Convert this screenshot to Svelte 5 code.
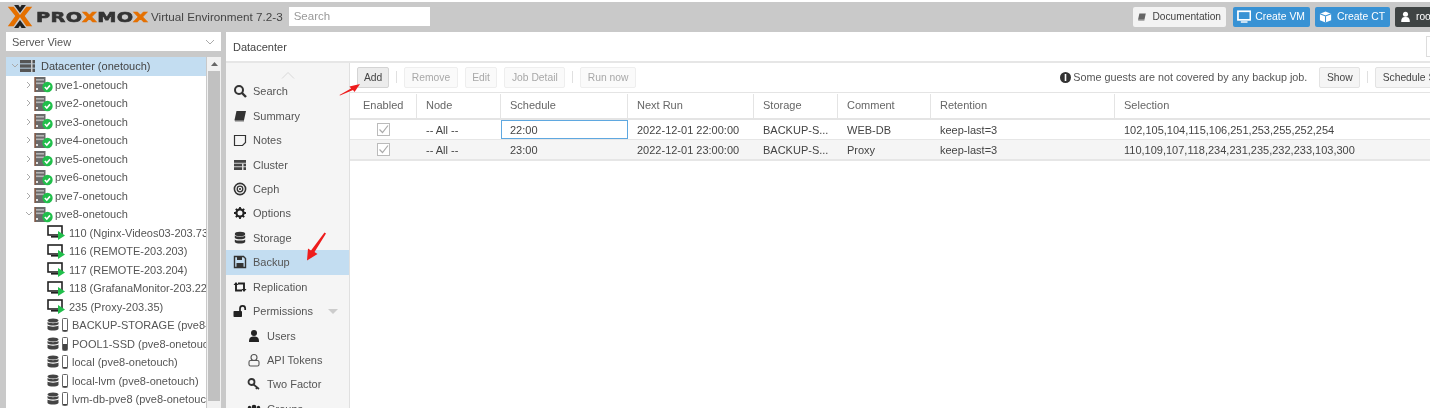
<script lang="ts">
  const nodes = ["pve1-onetouch", "pve2-onetouch", "pve3-onetouch", "pve4-onetouch", "pve5-onetouch", "pve6-onetouch", "pve7-onetouch"];
  const vms = ["110 (Nginx-Videos03-203.73)", "116 (REMOTE-203.203)", "117 (REMOTE-203.204)", "118 (GrafanaMonitor-203.220)", "235 (Proxy-203.35)"];
  const stores = [
    { name: "BACKUP-STORAGE (pve8-onetouch)", fill: 1 },
    { name: "POOL1-SSD (pve8-onetouch)", fill: 6 },
    { name: "local (pve8-onetouch)", fill: 1 },
    { name: "local-lvm (pve8-onetouch)", fill: 1 },
    { name: "lvm-db-pve8 (pve8-onetouch)", fill: 1 }
  ];
  const nav = [
    { label: "Search", icon: "search" },
    { label: "Summary", icon: "book" },
    { label: "Notes", icon: "note" },
    { label: "Cluster", icon: "cluster" },
    { label: "Ceph", icon: "ceph" },
    { label: "Options", icon: "gear" },
    { label: "Storage", icon: "db" },
    { label: "Backup", icon: "save", active: true },
    { label: "Replication", icon: "retweet" },
    { label: "Permissions", icon: "unlock", caret: true },
    { label: "Users", icon: "user", sub: true },
    { label: "API Tokens", icon: "lock", sub: true },
    { label: "Two Factor", icon: "key", sub: true },
    { label: "Groups", icon: "users", sub: true }
  ];
  const columns = [
    { label: "Enabled", w: 67 },
    { label: "Node", w: 84 },
    { label: "Schedule", w: 127 },
    { label: "Next Run", w: 126 },
    { label: "Storage", w: 84 },
    { label: "Comment", w: 93 },
    { label: "Retention", w: 184 },
    { label: "Selection", w: 320 }
  ];
  const jobs = [
    { time: "22:00", next: "2022-12-01 22:00:00", storage: "BACKUP-S...", comment: "WEB-DB", keep: "keep-last=3", sel: "102,105,104,115,106,251,253,255,252,254" },
    { time: "23:00", next: "2022-12-01 23:00:00", storage: "BACKUP-S...", comment: "Proxy", keep: "keep-last=3", sel: "110,109,107,118,234,231,235,232,233,103,300" }
  ];
</script>

{#snippet server()}
  <svg class="ico" width="20" height="17" viewBox="0 0 20 17">
    <rect x="0.5" y="1" width="11" height="15" fill="#6b6b6b" />
    <rect x="2" y="3" width="8" height="1.6" fill="#b5b5b5" />
    <rect x="2" y="6.5" width="8" height="1.6" fill="#b5b5b5" />
    <rect x="2" y="12" width="2" height="2" fill="#e3e3e3" />
    <rect x="0.5" y="1" width="1.4" height="15" fill="#8a5a44" />
    <circle cx="13.5" cy="11" r="5.2" fill="#21bf4b" />
    <path d="M10.8 11l2 2 3.2-3.6" fill="none" stroke="#fff" stroke-width="1.6" />
  </svg>
{/snippet}

{#snippet navIcon(name: string)}
  <svg class="ico" width="14" height="14" viewBox="0 0 14 14">
    {#if name === "search"}
      <circle cx="6" cy="6" r="4" fill="none" stroke="#333" stroke-width="2" />
      <path d="M9 9l4 4" stroke="#333" stroke-width="2.4" />
    {:else if name === "book"}
      <path d="M3.5 2h9.5l-2 9H1.5z" fill="#333" />
      <path d="M1.5 11h9.5v1.5H2z" fill="#777" />
    {:else if name === "note"}
      <path d="M1.5 2.5h11v7l-3 3h-8z" fill="none" stroke="#333" stroke-width="1.2" />
    {:else if name === "cluster"}
      <rect x="1" y="2" width="12" height="2.8" fill="#444" />
      <rect x="1" y="5.6" width="12" height="2.8" fill="#444" />
      <rect x="1" y="9.2" width="12" height="2.8" fill="#444" />
      <rect x="9" y="5.6" width="1.5" height="6.4" fill="#ddd" />
    {:else if name === "ceph"}
      <circle cx="7" cy="7" r="5.6" fill="none" stroke="#333" stroke-width="1.6" />
      <circle cx="7" cy="7" r="2.8" fill="none" stroke="#333" stroke-width="1.3" />
      <circle cx="7" cy="7" r="1.1" fill="#333" />
    {:else if name === "gear"}
      <circle cx="7" cy="7" r="3.6" fill="none" stroke="#222" stroke-width="2.2" />
      <path d="M7 1v2.4M7 10.6V13M1 7h2.4M10.6 7H13M2.8 2.8l1.7 1.7M9.5 9.5l1.7 1.7M2.8 11.2l1.7-1.7M9.5 4.5l1.7-1.7" stroke="#222" stroke-width="1.8" />
    {:else if name === "db"}
      <ellipse cx="7" cy="3" rx="5.2" ry="2.2" fill="#333" />
      <path d="M1.8 4.6c1.4 1.6 9 1.6 10.4 0V7c-1.4 1.8-9 1.8-10.4 0zM1.8 8.4c1.4 1.6 9 1.6 10.4 0v2.6c-1.4 2-9 2-10.4 0z" fill="#333" />
    {:else if name === "save"}
      <path d="M1.5 1.5h9l2 2v9h-11z" fill="none" stroke="#333" stroke-width="1.4" />
      <rect x="4" y="2" width="5" height="3" fill="#333" />
      <rect x="3.5" y="8" width="7" height="4" fill="#333" />
    {:else if name === "retweet"}
      <path d="M3 3.5v7h6M11 10.5v-7H5" fill="none" stroke="#222" stroke-width="1.9" />
      <path d="M0.5 5L3 2l2.5 3zM8.5 9l2.5 3 2.5-3z" fill="#222" />
    {:else if name === "unlock"}
      <rect x="0.5" y="7" width="8.5" height="6" rx="0.8" fill="#222" />
      <path d="M7 7V4.5a2.6 2.6 0 0 1 5.2 0V6" fill="none" stroke="#222" stroke-width="1.7" />
    {:else if name === "user"}
      <circle cx="7" cy="4" r="3" fill="#222" />
      <path d="M2 13c0-5 2-5.5 5-5.5s5 .5 5 5.5z" fill="#222" />
    {:else if name === "lock"}
      <circle cx="7" cy="4.5" r="3" fill="none" stroke="#555" stroke-width="1.1" />
      <rect x="2" y="7.5" width="10" height="5.5" rx="1.5" fill="#f5f5f5" stroke="#555" stroke-width="1.1" />
    {:else if name === "key"}
      <circle cx="4.5" cy="5" r="3" fill="none" stroke="#333" stroke-width="1.8" />
      <path d="M6.5 7.5l5.5 4.5M10 10.5l-1 1.5" stroke="#333" stroke-width="1.7" />
    {:else}
      <circle cx="7" cy="5" r="2.3" fill="#222" />
      <circle cx="2.5" cy="5.5" r="1.7" fill="#222" />
      <circle cx="11.5" cy="5.5" r="1.7" fill="#222" />
      <path d="M3 12c0-3 1.5-4 4-4s4 1 4 4zM0 10.5c0-2 1-2.5 2.5-2.5zM14 10.5c0-2-1-2.5-2.5-2.5z" fill="#222" />
    {/if}
  </svg>
{/snippet}

<div class="page">
  <header class="top">
    <div class="brand">
      <svg width="26" height="23" viewBox="0 0 33 27" preserveAspectRatio="none">
        <path d="M1 2h7.5l9 11-9 12H1l9.5-12z" fill="#e57000" />
        <path d="M32 2h-7.5l-9 11 9 12H32l-9.5-12z" fill="#e57000" />
        <path d="M9 0h5.5l2 3 2-3H24l-7.5 9.5zM9 27h5.5l2-3 2 3H24l-7.5-9.5z" fill="#222" />
      </svg>
      <span class="wordmark">PRO<b>X</b>MO<b>X</b></span>
    </div>
    <span class="version">Virtual Environment 7.2-3</span>
    <div class="search">Search</div>
    <div class="top-right">
      <span class="tbtn doc">
        <svg width="13" height="12" viewBox="0 0 14 14"><path d="M3.5 2h9.5l-2 9H1.5z" fill="#666" /><path d="M1.5 11h9.5v1.5H2z" fill="#999" /></svg>
        Documentation
      </span>
      <span class="tbtn blue">
        <svg width="15" height="14" viewBox="0 0 15 14"><rect x="1" y="1" width="13" height="9" fill="none" stroke="#fff" stroke-width="1.8" /><path d="M4 13h7v-1.5H4z" fill="#fff" /></svg>
        Create VM
      </span>
      <span class="tbtn blue ct">
        <svg width="14" height="14" viewBox="0 0 14 14"><path d="M7 1l6 2.5v7L7 13l-6-2.5v-7z" fill="#fff" /><path d="M1 3.5L7 6l6-2.5M7 6v7" fill="none" stroke="#3892d4" stroke-width="1.1" /></svg>
        Create CT
      </span>
      <span class="tbtn dark">
        <svg width="11" height="13" viewBox="0 0 14 14"><circle cx="7" cy="4" r="3.2" fill="#fff" /><path d="M1.5 14c0-6 2.5-6.5 5.5-6.5s5.5.5 5.5 6.5z" fill="#fff" /></svg>
        root@pam
      </span>
    </div>
  </header>

  <div class="main">
    <aside class="left">
      <div class="viewsel">
        <span>Server View</span>
        <svg width="10" height="6" viewBox="0 0 10 6"><path d="M1 1l4 4 4-4" fill="none" stroke="#aaa" /></svg>
      </div>
      <div class="tree-wrap">
        <div class="tree">
          <div class="row root">
            <svg class="chev" width="8" height="8" viewBox="0 0 8 8"><path d="M1 2l3 3 3-3" fill="none" stroke="#aaa" /></svg>
            <svg class="ico" width="15" height="14" viewBox="0 0 15 14">
              <rect x="0" y="1" width="15" height="3.4" fill="#555" />
              <rect x="0" y="5.3" width="15" height="3.4" fill="#555" />
              <rect x="0" y="9.6" width="15" height="3.4" fill="#555" />
              <rect x="11" y="1" width="1.5" height="12" fill="#ccc" />
            </svg>
            <span class="root-label">Datacenter (onetouch)</span>
          </div>
          {#each nodes as n}
            <div class="row node">
              <svg class="chev" width="8" height="8" viewBox="0 0 8 8"><path d="M2 1l3 3-3 3" fill="none" stroke="#aaa" /></svg>
              {@render server()}
              <span>{n}</span>
            </div>
          {/each}
          <div class="row node">
            <svg class="chev" width="8" height="8" viewBox="0 0 8 8"><path d="M1 2l3 3 3-3" fill="none" stroke="#aaa" /></svg>
            {@render server()}
            <span>pve8-onetouch</span>
          </div>
          {#each vms as v}
            <div class="row leaf">
              <svg class="ico" width="19" height="15" viewBox="0 0 19 15">
                <rect x="1" y="1" width="14" height="9" fill="none" stroke="#222" stroke-width="1.6" />
                <rect x="4" y="11" width="8" height="1.6" fill="#222" />
                <path d="M11 6l7 4.5-7 4.5z" fill="#21bf4b" />
              </svg>
              <span>{v}</span>
            </div>
          {/each}
          {#each stores as s}
            <div class="row leaf">
              <svg class="ico" width="22" height="14" viewBox="0 0 22 14">
                <ellipse cx="6" cy="2.5" rx="5.5" ry="2" fill="#444" />
                <path d="M.5 4c1.5 1.5 9.5 1.5 11 0v2.3c-1.5 1.7-9.5 1.7-11 0zM.5 7.5c1.5 1.5 9.5 1.5 11 0v3.5c-1.5 2-9.5 2-11 0z" fill="#444" />
                <rect x="15.5" y="0.5" width="5" height="13" rx="0.8" fill="#fff" stroke="#666" />
                <rect x="16" y={13 - s.fill} width="4" height={s.fill} fill="#444" />
              </svg>
              <span>{s.name}</span>
            </div>
          {/each}
        </div>
        <div class="scroll">
          <div class="scroll-btn"><svg width="7" height="4" viewBox="0 0 7 4"><path d="M0 4l3.5-4L7 4z" fill="#666" /></svg></div>
          <div class="thumb"></div>
        </div>
      </div>
    </aside>

    <section class="right">
      <div class="title">Datacenter<span class="title-btn"></span></div>
      <div class="panel">
        <nav class="tabs">
          <div class="tab-up"><svg width="14" height="7" viewBox="0 0 14 7"><path d="M1 6.5l6-6 6 6" fill="none" stroke="#d8d8d8" /></svg></div>
          {#each nav as item}
            <div class="tab" class:active={item.active} class:sub={item.sub}>
              {@render navIcon(item.icon)}
              <span>{item.label}</span>
              {#if item.caret}
                <svg class="caret" width="10" height="5" viewBox="0 0 10 5"><path d="M0 0h10L5 5z" fill="#ccc" /></svg>
              {/if}
            </div>
          {/each}
        </nav>
        <div class="content">
          <div class="toolbar">
            <span class="btn strong">Add</span>
            <i class="sep"></i>
            <span class="btn off">Remove</span>
            <span class="btn off">Edit</span>
            <span class="btn off">Job Detail</span>
            <i class="sep"></i>
            <span class="btn off">Run now</span>
            <div class="notice">
              <svg width="11" height="11" viewBox="0 0 11 11"><circle cx="5.5" cy="5.5" r="5.5" fill="#333" /><rect x="4.7" y="2" width="1.6" height="7" fill="#fff" /></svg>
              Some guests are not covered by any backup job.
            </div>
            <span class="btn show">Show</span>
            <i class="sep"></i>
            <span class="btn sched">Schedule Summary</span>
          </div>
          <div class="thead">
            {#each columns as c}
              <div class="th" style="width: {c.w}px">{c.label}</div>
            {/each}
          </div>
          {#each jobs as j, i}
            <div class="tr" class:alt={i === 1}>
              <div class="td check" style="width: {columns[0].w}px">
                <svg width="13" height="13" viewBox="0 0 13 13"><rect x="0.5" y="0.5" width="12" height="12" fill="#fff" stroke="#bbb" /><path d="M2.5 6.5l3 3 5.5-7" fill="none" stroke="#aaa" stroke-width="1.2" /></svg>
              </div>
              <div class="td" style="width: {columns[1].w}px">-- All --</div>
              <div class="td" class:focus={i === 0} style="width: {columns[2].w}px">{j.time}</div>
              <div class="td" style="width: {columns[3].w}px">{j.next}</div>
              <div class="td" style="width: {columns[4].w}px">{j.storage}</div>
              <div class="td" style="width: {columns[5].w}px">{j.comment}</div>
              <div class="td" style="width: {columns[6].w}px">{j.keep}</div>
              <div class="td" style="width: {columns[7].w}px">{j.sel}</div>
            </div>
          {/each}
        </div>
      </div>
    </section>
  </div>

  <svg class="arrow one" width="22" height="13" viewBox="0 0 22 13"><path d="M0.5 12L12 5.5 10.5 3.5 21 1l-5.5 8-1.5-2L1 12.5z" fill="#ee1c1c" /></svg>
  <svg class="arrow two" width="22" height="29" viewBox="0 0 22 29"><path d="M19.5 0.5L21 1.5 9.5 20l3 2L2 28.5l1-12 3 2z" fill="#ee1c1c" /></svg>
</div>

<style>
  :global(body) {
    margin: 0;
    background: #fff;
  }

  .page {
    position: relative;
    width: 1430px;
    height: 408px;
    overflow: hidden;
    background: #fff;
    color: #555;
    font: 11.5px "Liberation Sans", Arial, sans-serif;
    filter: blur(0.45px);
  }

  .top {
    display: flex;
    align-items: center;
    height: 29px;
    margin-top: 2px;
    background: #c9c9c9;
    padding-left: 7px;
  }

  .brand {
    display: flex;
    align-items: center;
    gap: 3px;
  }

  .wordmark {
    display: inline-block;
    width: 112px;
    font: 900 14.5px "DejaVu Sans", sans-serif;
    letter-spacing: 0.3px;
    color: #333;
    -webkit-text-stroke: 0.6px #333;
    transform: scaleX(1.33);
    transform-origin: left center;
    white-space: nowrap;
  }

  .wordmark b {
    color: #e57000;
    -webkit-text-stroke: 0.6px #e57000;
  }

  .version {
    margin-left: 3px;
    font-size: 11.7px;
    color: #444;
    white-space: nowrap;
  }

  .search {
    margin-left: 6px;
    width: 141px;
    height: 19px;
    line-height: 19px;
    padding-left: 5px;
    box-sizing: border-box;
    background: #fff;
    color: #999;
  }

  .top-right {
    margin-left: auto;
    display: flex;
    gap: 5px;
    width: 297px;
    overflow: hidden;
    flex: none;
  }

  .tbtn {
    display: flex;
    align-items: center;
    gap: 5px;
    height: 20px;
    padding: 0 5px;
    border-radius: 2px;
    white-space: nowrap;
    font-size: 10.2px;
    flex: none;
    box-sizing: border-box;
  }

  .doc {
    width: 93px;
    margin-right: 2px;
    background: #f3f3f3;
    color: #444;
    padding-left: 4px;
    gap: 6px;
  }

  .blue {
    width: 77px;
    background: #3892d4;
    color: #fff;
    padding-left: 4px;
    gap: 4px;
    font-size: 10.4px;
  }

  .ct {
    width: 75px;
    gap: 5px;
  }

  .dark {
    background: #3f4444;
    color: #fff;
  }

  .main {
    display: flex;
    height: 377px;
    background: #c9c9c9;
  }

  .left {
    width: 215px;
    margin-left: 6px;
    margin-right: 5px;
    flex: none;
    display: flex;
    flex-direction: column;
    margin-top: 1px;
  }

  .viewsel {
    display: flex;
    align-items: center;
    justify-content: space-between;
    height: 19px;
    padding: 0 6px;
    background: #fff;
    color: #555;
    font-size: 11px;
    flex: none;
  }

  .tree-wrap {
    margin-top: 6px;
    display: flex;
    flex: 1;
    min-height: 0;
    gap: 1px;
  }

  .tree {
    width: 200px;
    flex: none;
    background: #fff;
    overflow: hidden;
  }

  .row {
    display: flex;
    align-items: center;
    height: 18.5px;
    white-space: nowrap;
    overflow: hidden;
    font-size: 11px;
  }

  .root {
    background: #c3ddf1;
    padding-left: 5px;
    gap: 1px;
  }

  .root-label {
    margin-left: 5px;
    color: #444;
  }

  .node {
    padding-left: 19px;
    gap: 1px;
  }

  .leaf {
    padding-left: 41px;
    gap: 3px;
  }

  .ico {
    flex: none;
  }

  .chev {
    flex: none;
  }

  .scroll {
    flex: 1;
    background: #f1f1f1;
  }

  .scroll-btn {
    height: 14px;
    display: flex;
    justify-content: center;
    align-items: center;
  }

  .thumb {
    height: 330px;
    margin: 0 1px;
    background: #c1c1c1;
  }

  .right {
    flex: 1;
    min-width: 0;
    background: #fff;
    margin-top: 1px;
    display: flex;
    flex-direction: column;
  }

  .title {
    display: flex;
    align-items: center;
    justify-content: space-between;
    height: 29px;
    flex: none;
    padding-left: 7px;
    font-size: 11px;
    color: #444;
    border-bottom: 2px solid #e6e6e6;
  }

  .title-btn {
    width: 3px;
    height: 19px;
    border: 1px solid #ddd;
    border-right: 0;
  }

  .panel {
    display: flex;
    flex: 1;
    min-height: 0;
  }

  .tabs {
    width: 124px;
    flex: none;
    background: #f5f5f5;
    border-right: 1px solid #e0e0e0;
    box-sizing: border-box;
  }

  .tab-up {
    height: 16px;
    display: flex;
    justify-content: center;
    align-items: flex-end;
  }

  .tab {
    display: flex;
    align-items: center;
    gap: 6px;
    height: 24.45px;
    padding-left: 7px;
    color: #555;
    font-size: 11px;
    white-space: nowrap;
  }

  .tab.sub {
    padding-left: 21px;
  }

  .tab.active {
    background: #c3ddf1;
  }

  .caret {
    margin-left: 9px;
  }

  .content {
    flex: 1;
    min-width: 0;
    overflow: hidden;
  }

  .toolbar {
    display: flex;
    align-items: center;
    height: 30px;
    padding: 0 0 1px 7px;
    box-sizing: border-box;
    gap: 7px;
    border-bottom: 1px solid #e4e4e4;
    white-space: nowrap;
  }

  .btn {
    display: inline-flex;
    align-items: center;
    height: 19px;
    padding: 0 6.5px;
    border: 1px solid #e3e3e3;
    border-radius: 2px;
    background: #f5f5f5;
    font-size: 10.3px;
    color: #444;
    flex: none;
  }

  .strong {
    border-color: #d4d4d4;
    background: #ececec;
    padding: 0 6px;
  }

  .off {
    color: #a8a8a8;
    background: #fafafa;
    border-color: #eee;
  }

  .sep {
    width: 1px;
    height: 12px;
    background: #e0e0e0;
    flex: none;
  }

  .notice {
    margin-left: auto;
    display: flex;
    align-items: center;
    gap: 2px;
    font-size: 10.8px;
    color: #555;
  }

  .show {
    margin-left: 5px;
  }

  .sched {
    margin-right: -50px;
  }

  .thead {
    display: flex;
    height: 24px;
    margin-top: 1px;
    border-bottom: 2px solid #e4e4e4;
  }

  .th {
    flex: none;
    display: flex;
    align-items: center;
    padding: 0 0 2px 9px;
    box-sizing: border-box;
    border-right: 1px solid #e4e4e4;
    color: #666;
    font-size: 11px;
  }

  .th:first-child {
    padding-left: 13px;
  }

  .tr {
    display: flex;
    height: 19px;
    border-bottom: 1px solid #e6e6e6;
  }

  .tr.alt {
    background: #f5f5f5;
    border-bottom-width: 2px;
  }

  .td {
    flex: none;
    display: flex;
    align-items: center;
    padding-left: 9px;
    box-sizing: border-box;
    white-space: nowrap;
    font-size: 11px;
    color: #444;
  }

  .td.check {
    justify-content: center;
    padding: 0;
  }

  .td.focus {
    background: #fff;
    border: 1px solid #5fa8e0;
    padding-left: 8px;
  }

  .arrow {
    position: absolute;
  }

  .arrow.one {
    left: 339px;
    top: 83px;
  }

  .arrow.two {
    left: 305px;
    top: 232px;
  }
</style>
